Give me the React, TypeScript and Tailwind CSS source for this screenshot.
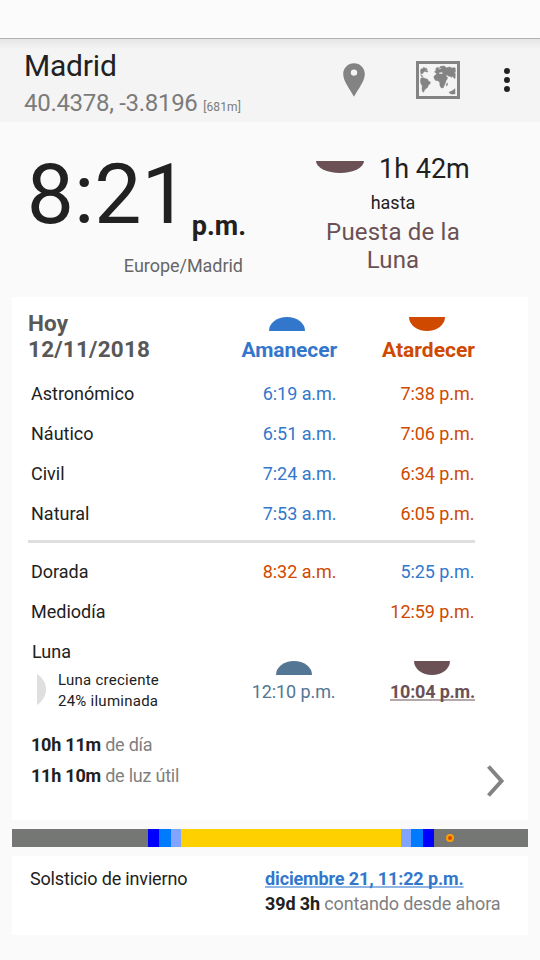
import React from "react";

const BLUE = "text-[#3377cc]";
const ORANGE = "text-[#cf4900]";

function HalfDisc({ down, className }: { down?: boolean; className: string }) {
  return (
    <svg className={className} viewBox="0 0 36 14" preserveAspectRatio="none" fill="currentColor">
      <path d={down ? "M0 0H36A18 14 0 0 1 0 0Z" : "M0 14A18 14 0 0 1 36 14Z"} />
    </svg>
  );
}

function PinIcon() {
  return (
    <svg className="h-[34px] w-[22px] text-[#838383]" viewBox="0 0 22 34" fill="currentColor">
      <path
        fillRule="evenodd"
        d="M11 .2C4.9.2.2 5 .2 11 .2 18.500 7 26 11 33.800 15 26 21.800 18.500 21.800 11 21.800 5 17.100.2 11 .2ZM11 6.400a3.200 3.200 0 1 1 0 6.400 3.200 3.200 0 0 1 0-6.400Z"
      />
    </svg>
  );
}

function MapIcon() {
  return (
    <svg className="h-[38px] w-11 text-[#838383]" viewBox="348 63 132 114" fill="currentColor">
      <rect x="352.500" y="67.500" width="123" height="105" fill="none" stroke="currentColor" strokeWidth="9" />
      <g stroke="currentColor" strokeWidth="1.500" strokeLinejoin="round">
        <path d="M362 90L364 86 368 87 371 82 375 86 378 91 382 92 384 96 377 95 374 94 370 97 369 100 364 102 362 99ZM372 84L380 85 382 89 376 87ZM362 104L367 107 369 110 364 109Z" />
        <path d="M363 114L370 113 377 116 383 118 385 123 391 126 390 131 385 136 383 142 377 146 373 151 371 157 367 154 366 145 367 138 363 131 361 124Z" />
        <path d="M404 96L406 92 411 91 407 88 408 85 414 82 417 85 414 91 419 87 427 87 423 84 419 84 420 80 428 78 435 79 438 84 444 82 450 81 455 84 465 83 466 86 466 97 462 96 466 102 465 116 461 113 458 109 453 112 450 109 445 108 440 104 438 108 442 112 442 116 438 122 436 129 433 135 430 143 424 144 420 137 419 127 414 122 406 121 402 114 402 109 407 104 411 100 407 99Z" />
        <path d="M439 132L443 129 442 136 439 138ZM447 157L454 154 460 150 465 146 465 162 452 162Z" />
      </g>
      <path d="M417 98L424 97 429 99 426 101 418 101Z" fill="#f4f4f4" />
    </svg>
  );
}

function Row({
  label,
  a,
  b,
  flip,
}: {
  label: string;
  a?: string;
  b: string;
  flip?: boolean;
}) {
  return (
    <div className="grid h-10 grid-cols-[171px_138px_138px] text-lg leading-10">
      <span className="pl-[3px]">{label}</span>
      <span className={`pr-[0.500px] text-right tracking-[-0.05px] ${flip ? ORANGE : BLUE}`}>{a}</span>
      <span className={`pr-[0.500px] text-right tracking-[-0.05px] ${flip && a ? BLUE : ORANGE}`}>{b}</span>
    </div>
  );
}

const BANDS = [
  "w-[136px] bg-[#747773]",
  "w-[11px] bg-[#0000ff]",
  "w-3 bg-[#007aff]",
  "w-2.5 bg-[#80a4ff]",
  "w-[220px] bg-[#ffd000]",
  "w-2.5 bg-[#80a4ff]",
  "w-3 bg-[#007aff]",
  "w-[11px] bg-[#0000ff]",
  "w-[94px] bg-[#747773]",
];

export default function App() {
  return (
    <div className="h-[960px] w-[540px] overflow-hidden bg-[#fafafa] font-['Roboto',sans-serif] text-[#212121]">
      <div className="h-[39px] border-b border-[#b2b2b2] bg-[#fbfbfb]" />
      <header className="flex h-[83px] bg-[#f4f4f4] bg-linear-to-b from-[#e6e6e6] to-[#f4f4f4] to-[10px] pl-6">
        <div className="w-[316px] pt-[9px]">
          <div className="h-[36px] text-[30px] leading-9 tracking-[-0.2px]">Madrid</div>
          <div className="h-[38px] whitespace-nowrap text-2xl leading-[38px] tracking-[-0.3px] text-[#7b7b7b]">
            40.4378, -3.8196 <span className="text-xs tracking-[0.1px]">[681m]</span>
          </div>
        </div>
        <div className="pl-[3px] pt-6"><PinIcon /></div>
        <div className="ml-[51px] pt-[22px]"><MapIcon /></div>
        <div className="ml-11 flex flex-col gap-[3px] pt-[29px]">
          <i className="size-1.5 rounded-full bg-[#212121]" />
          <i className="size-1.5 rounded-full bg-[#212121]" />
          <i className="size-1.5 rounded-full bg-[#212121]" />
        </div>
      </header>

      <section className="flex h-[175px]">
        <div className="w-[246px] text-right">
          <div className="flex h-[132px] justify-end whitespace-nowrap">
            <span className="pt-[23px] text-[84px] leading-[100px]">8:21</span>
            <span className="ml-[3px] pt-[86px] text-[27px] font-bold leading-9">p.m.</span>
          </div>
          <div className="pr-[3px] text-lg leading-6 tracking-[-0.03px] text-[#666666]">Europe/Madrid</div>
        </div>
        <div className="ml-[55px] w-[184px] text-center">
          <div className="flex h-[69px] items-start pl-[15px] pt-[29px]">
            <HalfDisc down className="mt-2.5 h-3 w-12 text-[#6b5155]" />
            <span className="ml-[15px] whitespace-nowrap text-[27px] leading-9">1h 42m</span>
          </div>
          <div className="text-lg leading-6">hasta</div>
          <div className="mt-[3px] text-2xl leading-7 tracking-[0.2px] text-[#6b5155]">Puesta de la<br />Luna</div>
        </div>
      </section>

      <section className="mx-3 h-[523px] bg-white pl-4">
        <div className="grid h-[77px] grid-cols-[171px_138px_138px] font-bold">
          <div className="pt-[13px] text-[22.500px] leading-[26px] tracking-[0.22px] text-[#585858]">Hoy<br />12/11/2018</div>
          <div className={`pt-5 text-right text-[21px] tracking-[-0.1px] ${BLUE}`}>
            <HalfDisc className="ml-[70px] h-3.5 w-9" />
            <div className="mt-1 leading-[30px]">Amanecer</div>
          </div>
          <div className={`pt-5 text-right text-[21px] ${ORANGE}`}>
            <HalfDisc down className="ml-[72px] h-3.5 w-9" />
            <div className="mt-1 leading-[30px]">Atardecer</div>
          </div>
        </div>
        <Row label="Astronómico" a="6:19 a.m." b="7:38 p.m." />
        <Row label="Náutico" a="6:51 a.m." b="7:06 p.m." />
        <Row label="Civil" a="7:24 a.m." b="6:34 p.m." />
        <Row label="Natural" a="7:53 a.m." b="6:05 p.m." />
        <div className="mb-[9px] mt-1.5 h-[3px] w-[447px] bg-[#dfdfdf]" />
        <Row label="Dorada" a="8:32 a.m." b="5:25 p.m." flip />
        <Row label="Mediodía" b="12:59 p.m." flip />
        <div className="grid h-[97px] grid-cols-[171px_138px_138px] text-lg">
          <div>
            <div className="h-[38px] pl-1 leading-10">Luna</div>
            <div className="flex pl-[9px]">
              <svg className="mt-1 h-[31px] w-[9px] text-[#dfdfdf]" viewBox="0 0 9 31" fill="currentColor">
                <path d="M0 0C12 8 12 23 0 31Z" />
              </svg>
              <div className="ml-3 whitespace-nowrap text-[15px] leading-[21px] tracking-[0.25px]">Luna creciente<br />24% iluminada</div>
            </div>
          </div>
          <div className="pt-[29px] text-right text-[#537694]">
            <HalfDisc className="ml-[77px] h-3.5 w-9" />
            <div className="pr-[1.500px] pt-1 leading-[26px] tracking-[-0.1px]">12:10 p.m.</div>
          </div>
          <div className="pt-[29px] text-right text-[#6b5155]">
            <HalfDisc down className="ml-[77px] h-3.5 w-9" />
            <div className="pt-1 font-bold leading-[26px] tracking-[-0.2px] underline decoration-[#b5a8aa] decoration-2 underline-offset-1 [text-decoration-skip-ink:none]">10:04 p.m.</div>
          </div>
        </div>
        <div className="flex text-lg text-[#7f7f7f]">
          <div className="w-[459px] pl-[3px] leading-[31px] tracking-[-0.22px]">
            <div><b className="text-[#212121]">10h 11m</b> de día</div>
            <div><b className="text-[#212121]">11h 10m</b> de luz útil</div>
          </div>
          <svg className="mt-9 h-8 w-[18px]" viewBox="0 0 18 32" fill="none" stroke="#838383" strokeWidth="4">
            <path d="M1.500 1.500L14.500 16 1.500 30.500" />
          </svg>
        </div>
      </section>

      <div className="relative mx-3 my-[9px] flex h-[18px]">
        {BANDS.map((c, i) => <div key={i} className={c} />)}
        <i className="absolute left-[434px] top-[5px] size-2 rounded-full border-2 border-[#ff9f00] bg-[#cf4900]" />
      </div>

      <section className="mx-3 flex h-[79px] bg-white pl-[18px] pt-2.5 text-lg leading-[25px]">
        <div className="w-[235px] tracking-[-0.17px]">Solsticio de invierno</div>
        <div className="whitespace-nowrap tracking-[-0.13px] text-[#7f7f7f]">
          <div className={`font-bold underline decoration-[#91b6e4] decoration-2 underline-offset-1 [text-decoration-skip-ink:none] ${BLUE}`}>diciembre 21, 11:22 p.m.</div>
          <div><b className="text-[#212121]">39d 3h</b> contando desde ahora</div>
        </div>
      </section>
    </div>
  );
}
